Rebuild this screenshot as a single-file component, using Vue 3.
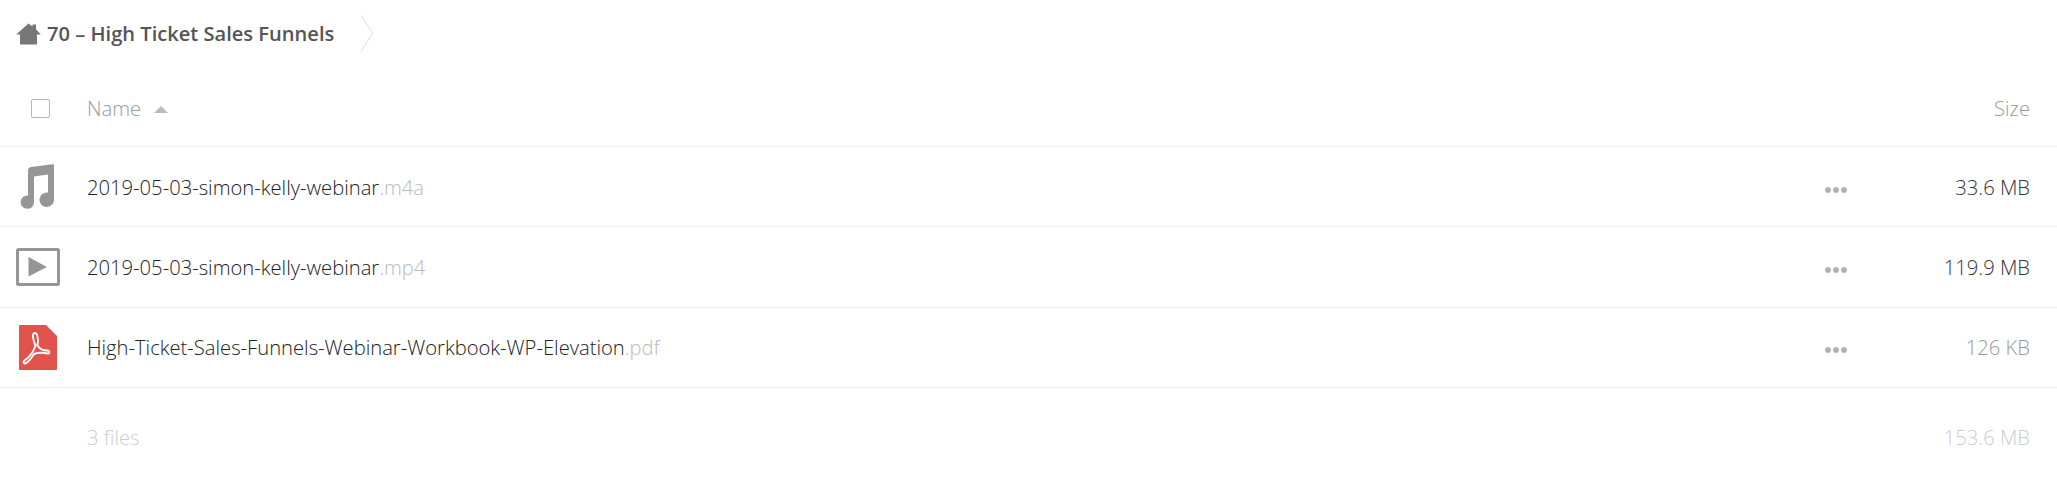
<template>
  <div class="files">
    <div class="crumbs">
      <svg class="home" viewBox="0 0 25 22" width="25" height="22">
        <path d="M12.5 0.5 L16.5 3.5 V1.5 H20 V6.3 L24.8 11.5 H21 V21.5 H4 V11.5 H0.2 Z" fill="#777" />
      </svg>
      <span class="crumb-name">70 – High Ticket Sales Funnels</span>
      <svg class="chevron" viewBox="0 0 14 40" width="14" height="40">
        <path d="M1 1.5 L12.5 19 L1 37.5" fill="none" stroke="#ddd" stroke-width="1" />
      </svg>
    </div>

    <div class="row head">
      <div class="icon-col"><span class="check"></span></div>
      <div class="name-col">
        <span>Name</span>
        <span class="sort"></span>
      </div>
      <div class="size-col">Size</div>
    </div>

    <div class="row" v-for="file in files" :key="file.ext">
      <div class="icon-col">
        <svg v-if="file.ext === '.m4a'" class="music" viewBox="0 0 34 45" width="34" height="45">
          <path d="M8 7 Q8 3.5 11 3 L32.5 0.2 Q34 0 34 1.5 V35 A7.3 7.3 0 1 1 28 28.5 V10.5 L14 12.5 V38 A6.7 6.7 0 1 1 8 31.5 Z" fill="#969696" />
        </svg>
        <svg v-else-if="file.ext === '.mp4'" viewBox="0 0 44 38" width="44" height="38">
          <rect x="1.5" y="1.5" width="41" height="35" rx="1" fill="none" stroke="#969696" stroke-width="3" />
          <path d="M12.5 9 L31 19 L12.5 28.5 Z" fill="#969696" />
        </svg>
        <svg v-else viewBox="0 0 38 45" width="38" height="45">
          <path d="M0 1 Q0 0 1 0 H27 L38 11 V44 Q38 45 37 45 H1 Q0 45 0 44 Z" fill="#e0524a" />
          <path d="M15.5 8 C13 8 13.5 14 16.5 20.5 C14.5 27 10.5 32 5.5 35.5 C3.5 37.5 5.5 39.5 7.5 38 C10.5 36 13 32 15 29 C19 27.5 24 27.5 28.5 28.5 C31 29 31 25.5 28 25.5 C24 25.5 20.5 24 18.5 20.5 C19.5 15 19 8 15.5 8 Z" fill="none" stroke="#fff" stroke-width="1.9" stroke-linejoin="round" />
        </svg>
      </div>
      <div class="name-col file-name">{{ file.base }}<span class="ext">{{ file.ext }}</span></div>
      <div class="dots"><i></i><i></i><i></i></div>
      <div class="size-col" :style="{ color: file.color }">{{ file.size }}</div>
    </div>

    <div class="row summary">
      <div class="icon-col"></div>
      <div class="name-col">3 files</div>
      <div class="size-col">153.6 MB</div>
    </div>
  </div>
</template>

<script setup>
const files = [
  { base: '2019-05-03-simon-kelly-webinar', ext: '.m4a', size: '33.6 MB', color: '#333' },
  { base: '2019-05-03-simon-kelly-webinar', ext: '.mp4', size: '119.9 MB', color: '#333' },
  { base: 'High-Ticket-Sales-Funnels-Webinar-Workbook-WP-Elevation', ext: '.pdf', size: '126 KB', color: '#999' }
]
</script>

<style>
html, body {
  background: #fff;
}
</style>

<style scoped>
.files {
  font-family: "Open Sans", "Liberation Sans", sans-serif;
  font-weight: 300;
  font-size: 20.2px;
  color: #222;
}

.crumbs {
  display: flex;
  align-items: center;
  height: 67px;
  padding-left: 16px;
}

.home {
  margin-right: 6px;
}

.crumb-name {
  font-weight: 600;
  font-size: 20.1px;
  color: #555;
}

.chevron {
  margin-left: 26px;
}

.row {
  display: flex;
  align-items: center;
  height: 80.33px;
  box-sizing: border-box;
  border-bottom: 1px solid #eee;
}

.head {
  height: 80px;
  color: #999;
  padding-top: 3px;
}

.icon-col {
  width: 76px;
  margin-right: 11px;
  display: flex;
  justify-content: center;
  align-items: center;
  flex-shrink: 0;
}

.music {
  margin-right: 2px;
}

.check {
  width: 19px;
  height: 19px;
  margin-left: 5px;
  border: 1.5px solid #b5b5b5;
  border-radius: 2px;
  box-sizing: border-box;
}

.sort {
  display: inline-block;
  margin-left: 13px;
  margin-bottom: 3px;
  border-left: 7px solid transparent;
  border-right: 7px solid transparent;
  border-bottom: 7px solid #bbb;
}

.name-col {
  flex: 1;
}

.ext {
  color: #bbb;
}

.dots {
  display: flex;
  gap: 2px;
  margin-top: 6px;
  margin-right: 63px;
}

.dots i {
  width: 6px;
  height: 6px;
  border-radius: 50%;
  background: #b2b2b2;
}

.size-col {
  width: 120px;
  padding-right: 27px;
  text-align: right;
  flex-shrink: 0;
}

.summary {
  height: 98px;
  border-bottom: none;
  color: #ccc;
}
</style>
